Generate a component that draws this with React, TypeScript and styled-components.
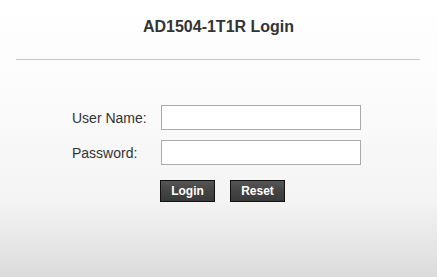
import { createGlobalStyle, styled } from 'styled-components'

const GlobalStyle = createGlobalStyle`
  html, body {
    margin: 0;
    padding: 0;
  }
  body {
    font-family: 'Liberation Sans', Arial, sans-serif;
    color: #333;
  }
`

const Page = styled.div`
  min-height: 100vh;
  box-sizing: border-box;
  background: linear-gradient(180deg, #ffffff 0%, #fbfbfb 35%, #f4f4f4 72%, #dbdbdb 100%);
`

const Header = styled.div`
  display: flex;
  justify-content: center;
  padding: 18px 0 23px;
`

const Title = styled.h1`
  margin: 0;
  font-size: 16px;
  line-height: 18px;
  font-weight: bold;
  color: #333;
`

const Divider = styled.hr`
  margin: 0 17px 0 16px;
  border: 0;
  border-top: 1px solid #c9c9c9;
  height: 0;
`

const Form = styled.form`
  display: grid;
  grid-template-columns: 89px 200px;
  row-gap: 10px;
  align-items: center;
  padding: 45px 0 0 72px;
  margin: 0;
`

const Label = styled.label`
  font-size: 14px;
  line-height: 16px;
  color: #333;
`

const Input = styled.input`
  box-sizing: border-box;
  width: 200px;
  height: 25px;
  margin: 0;
  padding: 2px 4px;
  border: 1px solid #aaa;
  border-radius: 0;
  background: #fff;
  font-family: inherit;
  font-size: 13px;
  outline: none;
`

const ButtonRow = styled.div`
  display: flex;
  gap: 15px;
  padding: 15px 0 0 160px;
`

const Button = styled.button`
  box-sizing: border-box;
  width: 55px;
  height: 22px;
  margin: 0;
  padding: 0;
  border: 1px solid #111;
  border-radius: 0;
  background: linear-gradient(180deg, #555 0%, #444 50%, #3a3a3a 100%);
  color: #fff;
  font-family: inherit;
  font-size: 12px;
  font-weight: bold;
  line-height: 20px;
  cursor: pointer;
`

export default function App() {
  return (
    <>
      <GlobalStyle />
      <Page>
        <Header>
          <Title>AD1504-1T1R Login</Title>
        </Header>
        <Divider />
        <Form onSubmit={(e) => e.preventDefault()}>
          <Label htmlFor="username">User Name:</Label>
          <Input id="username" type="text" />
          <Label htmlFor="password">Password:</Label>
          <Input id="password" type="password" />
        </Form>
        <ButtonRow>
          <Button type="button">Login</Button>
          <Button type="button">Reset</Button>
        </ButtonRow>
      </Page>
    </>
  )
}
